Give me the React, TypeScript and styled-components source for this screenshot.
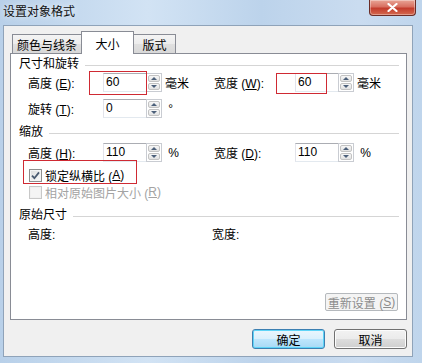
import React from 'react'
import styled, { createGlobalStyle } from 'styled-components'

const GlobalStyle = createGlobalStyle`
  html, body {
    margin: 0;
    padding: 0;
    background: #c4d8ec;
  }
  body {
    font-family: "Liberation Sans", "Noto Sans CJK SC", sans-serif;
    font-size: 12px;
    color: #000;
  }
`

const Window = styled.div`
  width: 422px;
  height: 363px;
  display: flex;
  flex-direction: column;
  overflow: hidden;
  background: linear-gradient(90deg, #b8d0e9 0%, #d2e3f4 35%, #bcd3eb 62%, #cadcf0 85%, #bfd5ec 100%);
`

const TitleBar = styled.div`
  height: 25px;
  flex: none;
  display: flex;
  justify-content: space-between;
  align-items: flex-start;
`

const TitleText = styled.div`
  padding: 4px 0 0 3px;
  line-height: 16px;
  font-size: 12px;
  color: #111;
  text-shadow: 0 0 6px rgba(255, 255, 255, 0.9);
`

const CloseButton = styled.div`
  width: 45px;
  height: 15px;
  margin-right: 6px;
  border: 1px solid #6b2c26;
  border-top: none;
  border-radius: 0 0 4px 4px;
  background: linear-gradient(#e9a596 0%, #d86f60 45%, #c33c2c 55%, #d46a50 100%);
  box-shadow: inset 0 0 0 1px rgba(255, 255, 255, 0.35);
  display: flex;
  align-items: center;
  justify-content: center;
`

const Client = styled.div`
  flex: 1;
  margin: 0 9px 6px 3px;
  border: 1px solid #8fa3b9;
  background: #f0f0f0;
  padding: 5px 5px 7px 6px;
  display: flex;
  flex-direction: column;
`

const TabStrip = styled.div`
  height: 23px;
  flex: none;
  display: flex;
  align-items: flex-start;
  padding-left: 2px;
  margin-bottom: -1px;
  position: relative;
  z-index: 1;
`

const Tab = styled.div<{ $active?: boolean; $w: number }>`
  box-sizing: border-box;
  width: ${p => p.$w}px;
  height: ${p => (p.$active ? 23 : 19)}px;
  margin-top: ${p => (p.$active ? 0 : 3)}px;
  margin-left: ${p => (p.$active ? -1 : 0)}px;
  margin-right: ${p => (p.$active ? -1 : 0)}px;
  border: 1px solid #898c95;
  border-bottom: none;
  background: ${p =>
    p.$active ? '#ffffff' : 'linear-gradient(#f4f4f4 0%, #ececec 50%, #e0e0e0 51%, #d8d8d8 100%)'};
  display: flex;
  justify-content: center;
  align-items: center;
  padding-top: ${p => (p.$active ? 0 : 1)}px;
  font-size: 12px;
  position: relative;
  z-index: ${p => (p.$active ? 2 : 1)};
`

const Panel = styled.div`
  flex: 1;
  background: #fff;
  border: 1px solid #898c95;
  padding: 3px 7px 8px 8px;
  display: flex;
  flex-direction: column;
`

const SectionHeader = styled.div<{ $mt: number }>`
  display: flex;
  align-items: center;
  height: 14px;
  line-height: 14px;
  margin-top: ${p => p.$mt}px;
`

const SectionLine = styled.div`
  flex: 1;
  height: 1px;
  margin: 2px 0 0 6px;
  background: #d5d5d5;
`

const Row = styled.div<{ $mt: number; $h?: number }>`
  display: flex;
  align-items: center;
  height: ${p => p.$h ?? 19}px;
  margin-top: ${p => p.$mt}px;
  padding-left: 9px;
`

const Field = styled.div<{ $w?: number }>`
  display: flex;
  align-items: center;
  width: ${p => (p.$w ? `${p.$w}px` : 'auto')};
`

const Label = styled.div<{ $w: number }>`
  width: ${p => p.$w}px;
  flex: none;
  white-space: nowrap;
`

const InputGroup = styled.div`
  position: relative;
  display: flex;
  height: 19px;
`

const NumberInput = styled.div<{ $w: number }>`
  box-sizing: border-box;
  width: ${p => p.$w}px;
  height: 19px;
  border: 1px solid #abadb3;
  border-right: none;
  border-bottom-color: #e3e9ef;
  border-left-color: #e2e3ea;
  padding-left: 2px;
  line-height: 17px;
  font-family: "Liberation Sans", sans-serif;
  font-size: 12px;
  background: #fff;
`

const Spinner = styled.div`
  box-sizing: border-box;
  width: 16px;
  height: 19px;
  border: 1px solid #c9ccd2;
  display: flex;
  flex-direction: column;
  padding: 1px;
  gap: 1px;
`

const SpinHalf = styled.div<{ $up?: boolean }>`
  flex: 1;
  border-radius: 2px;
  background: linear-gradient(#f7f7f7, #e2e2e2);
  border: 1px solid #c3c3c3;
  display: flex;
  align-items: center;
  justify-content: center;
  &::after {
    content: '';
    width: 0;
    height: 0;
    border-left: 3px solid transparent;
    border-right: 3px solid transparent;
    ${p => (p.$up ? 'border-bottom: 3px solid #4c607a;' : 'border-top: 3px solid #4c607a;')}
  }
`

const Unit = styled.div`
  margin-left: 3px;
  white-space: nowrap;
`

const Highlight = styled.div<{ $l: number; $t: number; $w: number; $h: number }>`
  position: absolute;
  left: ${p => p.$l}px;
  top: ${p => p.$t}px;
  width: ${p => p.$w}px;
  height: ${p => p.$h}px;
  box-sizing: border-box;
  border: 1px solid #cf2a33;
  pointer-events: none;
`

const CheckRow = styled.div<{ $mt: number; $disabled?: boolean }>`
  position: relative;
  display: flex;
  align-items: center;
  height: 14px;
  margin-top: ${p => p.$mt}px;
  margin-left: 10px;
  width: fit-content;
  color: ${p => (p.$disabled ? '#a3a3a3' : '#000')};
`

const CheckBox = styled.div<{ $disabled?: boolean }>`
  box-sizing: border-box;
  width: 13px;
  height: 13px;
  margin-right: 3px;
  border: 1px solid ${p => (p.$disabled ? '#c8c8c8' : '#8e8f8f')};
  background: ${p => (p.$disabled ? '#f4f4f4' : 'linear-gradient(135deg, #dcdcdc, #fbfbfb)')};
  box-shadow: inset 0 0 0 1px ${p => (p.$disabled ? '#f0f0f0' : '#f4f4f4')};
  display: flex;
  align-items: center;
  justify-content: center;
`

const Spacer = styled.div`
  flex: 1;
`

const ResetButton = styled.div`
  align-self: flex-end;
  margin-right: 1px;
  box-sizing: border-box;
  width: 73px;
  height: 18px;
  border: 1px solid #b5b9bd;
  border-radius: 2px;
  background: #f4f4f4;
  color: #8c8c8c;
  display: flex;
  align-items: center;
  justify-content: center;
  font-size: 12px;
`

const ButtonRow = styled.div`
  flex: none;
  display: flex;
  justify-content: flex-end;
  gap: 9px;
  margin-top: 9px;
`

const DialogButton = styled.div<{ $default?: boolean }>`
  box-sizing: border-box;
  width: 73px;
  height: 20px;
  border-radius: 3px;
  border: 1px solid ${p => (p.$default ? '#3c7fb1' : '#707070')};
  background: ${p =>
    p.$default
      ? 'linear-gradient(#eaf6fd 0%, #d9f0fc 50%, #bee6fd 51%, #a7d9f5 100%)'
      : 'linear-gradient(#f2f2f2 0%, #ebebeb 50%, #dddddd 51%, #cfcfcf 100%)'};
  box-shadow: inset 0 0 0 1px ${p => (p.$default ? '#5ed4f7' : '#fcfcfc')};
  display: flex;
  align-items: center;
  justify-content: center;
  font-size: 12px;
`

const Acc = ({ k }: { k: string }) => (
  <>
    (<u>{k}</u>)
  </>
)

const Spin = () => (
  <Spinner>
    <SpinHalf $up />
    <SpinHalf />
  </Spinner>
)

const App: React.FC = () => {
  return (
    <>
      <GlobalStyle />
      <Window>
        <TitleBar>
          <TitleText>设置对象格式</TitleText>
          <CloseButton>
            <svg width="11" height="9" viewBox="0 0 11 9">
              <path d="M1.5 1 L9.5 8 M9.5 1 L1.5 8" stroke="#fff" strokeWidth="2.2" strokeLinecap="round" />
            </svg>
          </CloseButton>
        </TitleBar>
        <Client>
          <TabStrip>
            <Tab $w={70}>颜色与线条</Tab>
            <Tab $w={53} $active>大小</Tab>
            <Tab $w={43}>版式</Tab>
          </TabStrip>
          <Panel>
            <SectionHeader $mt={0}>
              尺寸和旋转
              <SectionLine />
            </SectionHeader>
            <Row $mt={2}>
              <Field $w={186}>
                <Label $w={75}>
                  高度 <Acc k="E" />:
                </Label>
                <InputGroup>
                  <NumberInput $w={43}>60</NumberInput>
                  <Spin />
                  <Highlight $l={-14} $t={-2} $w={58} $h={24} />
                </InputGroup>
                <Unit>毫米</Unit>
              </Field>
              <Field>
                <Label $w={81}>
                  宽度 <Acc k="W" />:
                </Label>
                <InputGroup>
                  <NumberInput $w={43}>60</NumberInput>
                  <Spin />
                  <Highlight $l={-19} $t={0} $w={51} $h={21} />
                </InputGroup>
                <Unit>毫米</Unit>
              </Field>
            </Row>
            <Row $mt={7}>
              <Field $w={186}>
                <Label $w={75}>
                  旋转 <Acc k="T" />:
                </Label>
                <InputGroup>
                  <NumberInput $w={43}>0</NumberInput>
                  <Spin />
                </InputGroup>
                <Unit>&nbsp;°</Unit>
              </Field>
            </Row>
            <SectionHeader $mt={7}>
              缩放
              <SectionLine />
            </SectionHeader>
            <Row $mt={4}>
              <Field $w={186}>
                <Label $w={75}>
                  高度 <Acc k="H" />:
                </Label>
                <InputGroup>
                  <NumberInput $w={43}>110</NumberInput>
                  <Spin />
                </InputGroup>
                <Unit>&nbsp;%</Unit>
              </Field>
              <Field>
                <Label $w={81}>
                  宽度 <Acc k="D" />:
                </Label>
                <InputGroup>
                  <NumberInput $w={43}>110</NumberInput>
                  <Spin />
                </InputGroup>
                <Unit>&nbsp;%</Unit>
              </Field>
            </Row>
            <CheckRow $mt={6}>
              <CheckBox>
                <svg width="9" height="9" viewBox="0 0 9 9">
                  <path d="M1 4.6 L3.4 7.2 L8 1.4" fill="none" stroke="#4a5a70" strokeWidth="1.8" />
                </svg>
              </CheckBox>
              锁定纵横比 <Acc k="A" />
              <Highlight $l={-6} $t={-8} $w={114} $h={24} />
            </CheckRow>
            <CheckRow $mt={3} $disabled>
              <CheckBox $disabled />
              相对原始图片大小 <Acc k="R" />
            </CheckRow>
            <SectionHeader $mt={9}>
              原始尺寸
              <SectionLine />
            </SectionHeader>
            <Row $mt={4} $h={14}>
              <Field $w={184}>
                <Label $w={75}>高度:</Label>
              </Field>
              <Field>
                <Label $w={81}>宽度:</Label>
              </Field>
            </Row>
            <Spacer />
            <ResetButton>
              重新设置 <Acc k="S" />
            </ResetButton>
          </Panel>
          <ButtonRow>
            <DialogButton $default>确定</DialogButton>
            <DialogButton>取消</DialogButton>
          </ButtonRow>
        </Client>
      </Window>
    </>
  )
}

export default App
